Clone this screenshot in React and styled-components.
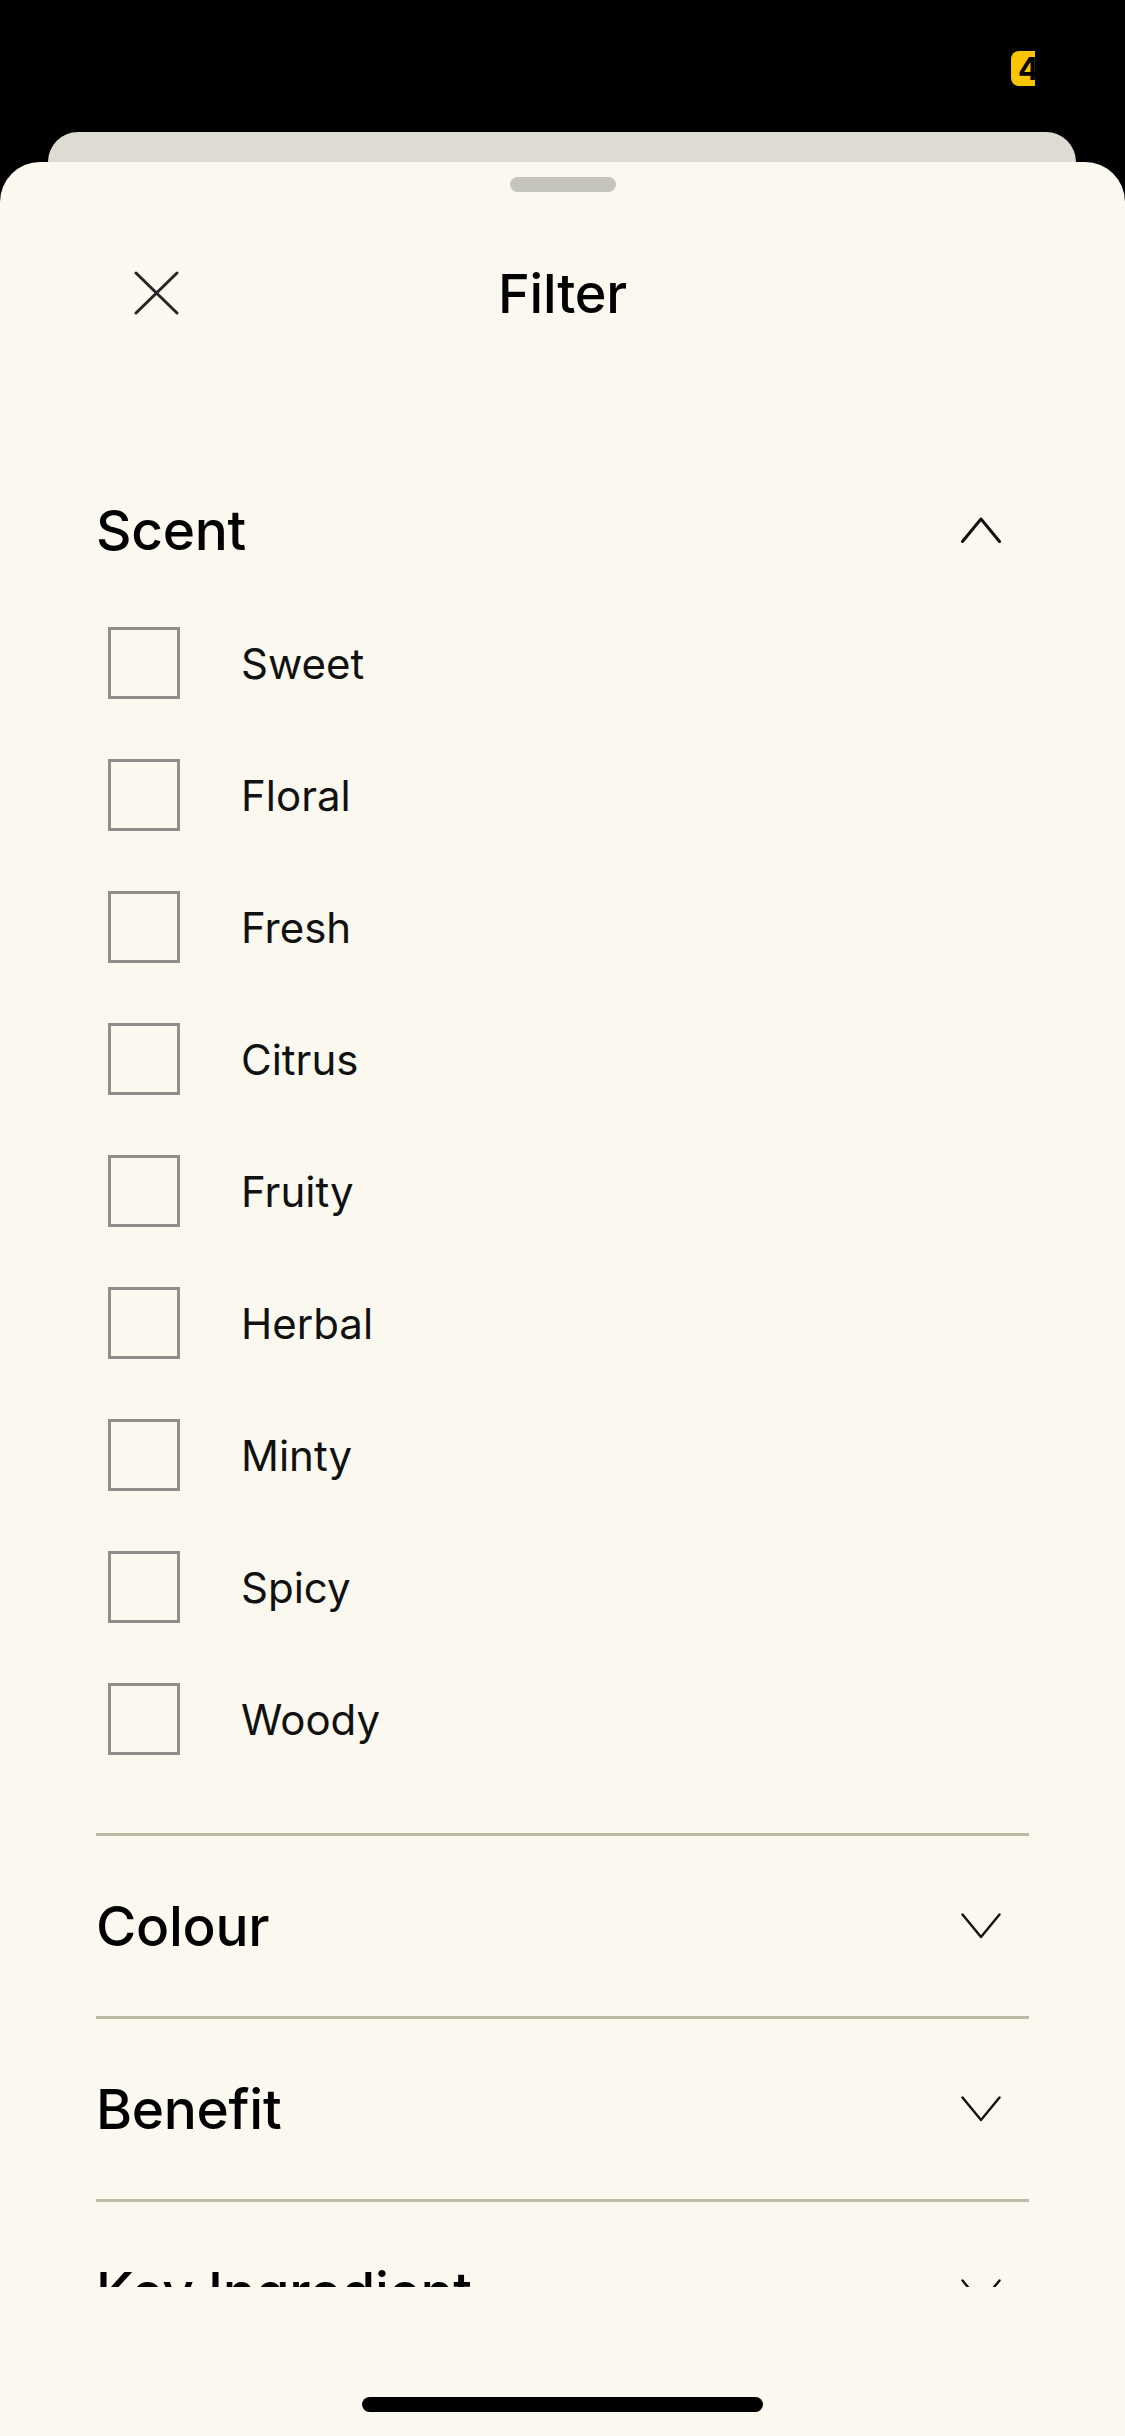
import React from 'react'
import styled, { createGlobalStyle } from 'styled-components'

const GlobalStyle = createGlobalStyle`
  html, body {
    margin: 0;
    padding: 0;
    background: #000;
  }
  body {
    font-family: Inter, "Noto Sans", "Liberation Sans", sans-serif;
    -webkit-font-smoothing: antialiased;
  }
  *, *::before, *::after {
    box-sizing: border-box;
  }
`;

const Screen = styled.div`
  width: 1125px;
  height: 2436px;
  display: flex;
  flex-direction: column;
  background: #000;
  overflow: hidden;
`;

const StatusBar = styled.div`
  height: 132px;
  display: flex;
  justify-content: flex-end;
  align-items: flex-start;
  padding: 51px 90px 0 0;
  flex-shrink: 0;
`;

const Battery = styled.div`
  width: 24px;
  height: 35px;
  background: #f7c600;
  border-radius: 8px 0 0 8px;
  overflow: hidden;
  color: #000;
  font-weight: 700;
  font-size: 31px;
  line-height: 35px;
  padding-left: 7px;
  white-space: nowrap;
`;

const BackCard = styled.div`
  height: 30px;
  margin: 0 49px 0 48px;
  background: #dddbd2;
  border-radius: 30px 30px 0 0;
  flex-shrink: 0;
`;

const Sheet = styled.div`
  flex: 1;
  display: flex;
  flex-direction: column;
  background: #fbf9ef;
  border-radius: 40px 40px 0 0;
  padding-top: 15px;
  min-height: 0;
`;

const Grabber = styled.div`
  width: 106px;
  height: 15px;
  border-radius: 8px;
  background: #c6c5bd;
  margin: 0 auto;
  flex-shrink: 0;
`;

const TopBar = styled.div`
  height: 202px;
  display: grid;
  grid-template-columns: 1fr auto 1fr;
  align-items: center;
  padding: 0 134px;
  flex-shrink: 0;
`;

const CloseButton = styled.button`
  width: 45px;
  height: 44px;
  padding: 0;
  border: 0;
  background: none;
  color: #262626;
  display: flex;
`;

const Title = styled.h1`
  margin: 0;
  font-size: 54px;
  font-weight: 500;
  letter-spacing: -0.2px;
  color: #000;
`;

const ScrollArea = styled.div`
  height: 1893px;
  overflow: hidden;
  padding: 69px 96px 0;
  flex-shrink: 0;
`;

const Section = styled.section`
  border-bottom: 3px solid #bcbba3;
  padding-bottom: ${p => (p.$open ? '48px' : '0')};
`;

const SectionHeader = styled.div`
  height: ${p => (p.$open ? '134px' : '180px')};
  display: flex;
  align-items: center;
  justify-content: space-between;
  padding-right: 28px;
`;

const SectionTitle = styled.h2`
  margin: 0;
  font-size: 55px;
  font-weight: 500;
  letter-spacing: -0.3px;
  color: #000;
`;

const Chevron = styled.svg`
  width: 40px;
  height: 26px;
  color: #111;
`;

const OptionList = styled.ul`
  list-style: none;
  margin: 0;
  padding: 0;
`;

const Option = styled.li`
  height: 132px;
  display: flex;
  align-items: center;
  padding-left: 12px;
`;

const Checkbox = styled.span`
  width: 72px;
  height: 72px;
  border: 3px solid #8f8e8c;
  margin-right: 61px;
  flex-shrink: 0;
`;

const OptionLabel = styled.span`
  font-size: 42px;
  font-weight: 400;
  color: #111;
`;

const BottomArea = styled.div`
  flex: 1;
  display: flex;
  justify-content: center;
  padding-top: 110px;
`;

const HomeIndicator = styled.div`
  width: 401px;
  height: 15px;
  border-radius: 8px;
  background: #000;
`;

const scents = ['Sweet', 'Floral', 'Fresh', 'Citrus', 'Fruity', 'Herbal', 'Minty', 'Spicy', 'Woody']

const sections = [
  { title: 'Scent', options: scents },
  { title: 'Colour' },
  { title: 'Benefit' },
  { title: 'Key Ingredient' },
]

const CloseIcon = () => (
  <svg width="45" height="44" viewBox="0 0 45 44" fill="none">
    <path d="M2 2 L43 42 M43 2 L2 42" stroke="currentColor" strokeWidth="3" strokeLinecap="round" />
  </svg>
)

const ChevronIcon = ({ up }) => (
  <Chevron viewBox="0 0 40 26" fill="none">
    <path
      d={up ? 'M1.5 24.5 L20 2 L38.5 24.5' : 'M1.5 1.5 L20 24 L38.5 1.5'}
      stroke="currentColor"
      strokeWidth={up ? 3 : 2.4}
      strokeLinecap="round"
      strokeLinejoin="round"
    />
  </Chevron>
)

const FilterSection = ({ title, options }) => {
  const open = !!options
  return (
    <Section $open={open}>
      <SectionHeader $open={open}>
        <SectionTitle>{title}</SectionTitle>
        <ChevronIcon up={open} />
      </SectionHeader>
      {open && (
        <OptionList>
          {options.map(o => (
            <Option key={o}>
              <Checkbox />
              <OptionLabel>{o}</OptionLabel>
            </Option>
          ))}
        </OptionList>
      )}
    </Section>
  )
}

const App = () => {
  return (
    <Screen>
      <GlobalStyle />
      <StatusBar>
        <Battery>4</Battery>
      </StatusBar>
      <BackCard />
      <Sheet>
        <Grabber />
        <TopBar>
          <CloseButton aria-label="Close">
            <CloseIcon />
          </CloseButton>
          <Title>Filter</Title>
          <span />
        </TopBar>
        <ScrollArea>
          {sections.map(s => (
            <FilterSection key={s.title} title={s.title} options={s.options} />
          ))}
        </ScrollArea>
        <BottomArea>
          <HomeIndicator />
        </BottomArea>
      </Sheet>
    </Screen>
  )
}

export default App
